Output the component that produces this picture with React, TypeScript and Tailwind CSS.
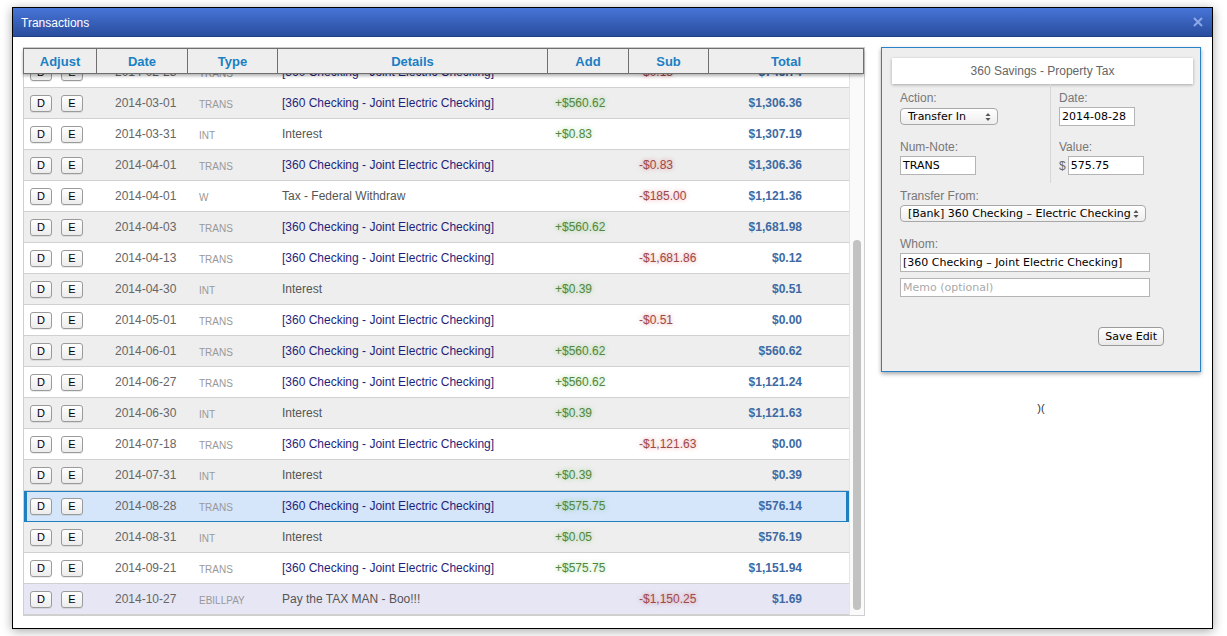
import React from "react";

type Row = {
  date: string;
  type: string;
  details: string;
  link?: boolean;
  add?: string;
  sub?: string;
  total: string;
  tone: "gray" | "white" | "sel" | "lav";
};

const rows: Row[] = [
  { date: "2014-02-28", type: "TRANS", details: "[360 Checking - Joint Electric Checking]", link: true, sub: "-$0.13", total: "$745.74", tone: "white" },
  { date: "2014-03-01", type: "TRANS", details: "[360 Checking - Joint Electric Checking]", link: true, add: "+$560.62", total: "$1,306.36", tone: "gray" },
  { date: "2014-03-31", type: "INT", details: "Interest", add: "+$0.83", total: "$1,307.19", tone: "white" },
  { date: "2014-04-01", type: "TRANS", details: "[360 Checking - Joint Electric Checking]", link: true, sub: "-$0.83", total: "$1,306.36", tone: "gray" },
  { date: "2014-04-01", type: "W", details: "Tax - Federal Withdraw", sub: "-$185.00", total: "$1,121.36", tone: "white" },
  { date: "2014-04-03", type: "TRANS", details: "[360 Checking - Joint Electric Checking]", link: true, add: "+$560.62", total: "$1,681.98", tone: "gray" },
  { date: "2014-04-13", type: "TRANS", details: "[360 Checking - Joint Electric Checking]", link: true, sub: "-$1,681.86", total: "$0.12", tone: "white" },
  { date: "2014-04-30", type: "INT", details: "Interest", add: "+$0.39", total: "$0.51", tone: "gray" },
  { date: "2014-05-01", type: "TRANS", details: "[360 Checking - Joint Electric Checking]", link: true, sub: "-$0.51", total: "$0.00", tone: "white" },
  { date: "2014-06-01", type: "TRANS", details: "[360 Checking - Joint Electric Checking]", link: true, add: "+$560.62", total: "$560.62", tone: "gray" },
  { date: "2014-06-27", type: "TRANS", details: "[360 Checking - Joint Electric Checking]", link: true, add: "+$560.62", total: "$1,121.24", tone: "white" },
  { date: "2014-06-30", type: "INT", details: "Interest", add: "+$0.39", total: "$1,121.63", tone: "gray" },
  { date: "2014-07-18", type: "TRANS", details: "[360 Checking - Joint Electric Checking]", link: true, sub: "-$1,121.63", total: "$0.00", tone: "white" },
  { date: "2014-07-31", type: "INT", details: "Interest", add: "+$0.39", total: "$0.39", tone: "gray" },
  { date: "2014-08-28", type: "TRANS", details: "[360 Checking - Joint Electric Checking]", link: true, add: "+$575.75", total: "$576.14", tone: "sel" },
  { date: "2014-08-31", type: "INT", details: "Interest", add: "+$0.05", total: "$576.19", tone: "gray" },
  { date: "2014-09-21", type: "TRANS", details: "[360 Checking - Joint Electric Checking]", link: true, add: "+$575.75", total: "$1,151.94", tone: "white" },
  { date: "2014-10-27", type: "EBILLPAY", details: "Pay the TAX MAN - Boo!!!", sub: "-$1,150.25", total: "$1.69", tone: "lav" },
];

const toneClass = {
  gray: "bg-[#eeeeee] border-b border-[#d0d0d0]",
  white: "bg-white border-b border-[#d0d0d0]",
  sel: "bg-[#d5e5fa] border-b border-[#1f7fc0] shadow-[inset_3px_0_0_#1f7fc0,inset_-3px_0_0_#1f7fc0,inset_0_1px_0_#1f7fc0]",
  lav: "bg-[#e6e6f5] border-b border-[#d0d0d0]",
};

const inputFont = "font-['DejaVu_Sans',sans-serif] text-[11px] text-black";

const SmallBtn = ({ label }: { label: string }) => (
  <button className="w-[22px] h-[17px] rounded-[3px] border border-[#9a9a9a] bg-gradient-to-b from-white to-[#ececec] text-[11px] leading-none text-black shadow-[0_1px_0_rgba(0,0,0,0.08)]">
    {label}
  </button>
);

const Arrows = () => (
  <svg width="6" height="10" viewBox="0 0 6 10" className="ml-auto shrink-0">
    <path d="M3 1 L5.5 4 H0.5 Z" fill="#555" />
    <path d="M3 9 L5.5 6 H0.5 Z" fill="#555" />
  </svg>
);

const headers = [
  { label: "Adjust", w: "w-[73px]" },
  { label: "Date", w: "w-[91px]" },
  { label: "Type", w: "w-[90px]" },
  { label: "Details", w: "w-[270px]" },
  { label: "Add", w: "w-[81px]" },
  { label: "Sub", w: "w-[80px]" },
  { label: "Total", w: "flex-1" },
];

export default function App() {
  return (
    <div className="w-[1227px] h-[636px] bg-white pt-[7px] pl-[12px] font-['Liberation_Sans',Arial,sans-serif]">
      <div className="w-[1201px] h-[622px] border border-black bg-white shadow-[0_2px_10px_rgba(0,0,0,0.35)] flex flex-col">
        {/* title bar */}
        <div className="h-[29px] flex items-center pl-[8px] pr-[9px] bg-gradient-to-b from-[#4775d8] to-[#2a4d9e] border-b border-[#203f85]">
          <span className="text-white text-[12px] pt-[2px]">Transactions</span>
          <svg width="10" height="10" viewBox="0 0 10 10" className="ml-auto">
            <path d="M1 1 L9 9 M9 1 L1 9" stroke="#8ea7e6" strokeWidth="2" />
          </svg>
        </div>

        <div className="flex pl-[10px] pt-[10px]">
          {/* table */}
          <div className="w-[842px] h-[569px] border border-[#cfcfcf] flex flex-col bg-white">
            <div className="relative z-10 h-[26px] -ml-px flex border border-[#6f6f6f] bg-[#eeeeee] shadow-[0_2px_3px_rgba(0,0,0,0.3)]">
              {headers.map((h, i) => (
                <div
                  key={h.label}
                  className={`${h.w} flex items-center justify-center pt-[1px] text-[13px] font-bold text-[#1b7fc3] ${
                    i < headers.length - 1 ? "border-r border-[#6f6f6f]" : ""
                  }`}
                >
                  {h.label}
                </div>
              ))}
            </div>
            <div className="flex flex-1 min-h-0">
              <div className="w-[825px] overflow-hidden">
                <div className="-mt-[17px]">
                  {rows.map((r, i) => (
                    <div key={i} className={`h-[31px] flex items-center text-[12px] ${toneClass[r.tone]}`}>
                      <div className="w-[72px] flex gap-[9px] pl-[6px]">
                        <SmallBtn label="D" />
                        <SmallBtn label="E" />
                      </div>
                      <div className="w-[91px] pl-[19px] text-[#666]">{r.date}</div>
                      <div className="w-[90px] pl-[12px] pt-[2px] text-[10px] text-[#999]">{r.type}</div>
                      <div className={`w-[270px] pl-[5px] ${r.link ? "text-[#1f1f7a]" : "text-[#555]"}`}>{r.details}</div>
                      <div className="w-[81px] pl-[8px] text-[#55853f] [text-shadow:0_0_4px_rgba(90,200,70,0.6)]">{r.add}</div>
                      <div className="w-[80px] pl-[11px] text-[#9b4a4a] [text-shadow:0_0_4px_rgba(220,80,80,0.6)]">{r.sub}</div>
                      <div className="flex-1 text-right pr-[47px] font-bold text-[#3d6aa3]">{r.total}</div>
                    </div>
                  ))}
                </div>
              </div>
              <div className="w-[15px] border-l border-[#e4e4e4] bg-[#fafafa] flex flex-col pt-[166px] pb-[5px] items-center">
                <div className="w-[8px] flex-1 rounded-full bg-[#c2c2c2]" />
              </div>
            </div>
          </div>

          {/* edit panel */}
          <div className="ml-[16px] flex flex-col items-center">
            <div className="w-[320px] h-[325px] border border-[#2a83c6] bg-[#eeeeee] shadow-[0_2px_4px_rgba(0,0,0,0.35)] pt-[10px] pl-[10px] pr-[7px]">
              <div className="h-[26px] bg-white shadow-[0_1px_3px_rgba(0,0,0,0.3)] flex items-center justify-center text-[12px] text-[#666]">
                360 Savings - Property Tax
              </div>
              <div className="pl-[8px] text-[12px] leading-[14px] text-[#777]">
                <div className="flex">
                  <div className="w-[151px] pt-[7px] pb-[8px] border-r border-[#d6d6d6]">
                    <div>Action:</div>
                    <div className={`mt-[3px] w-[98px] h-[17px] rounded-[4px] border border-[#a8a8a8] bg-gradient-to-b from-white to-[#eeeeee] flex items-center pl-[7px] pr-[6px] ${inputFont}`}>
                      Transfer In
                      <Arrows />
                    </div>
                    <div className="mt-[15px]">Num-Note:</div>
                    <div className={`mt-[2px] w-[76px] h-[19px] border border-[#b4b4b4] bg-white flex items-center pl-[2px] ${inputFont}`}>
                      TRANS
                    </div>
                  </div>
                  <div className="pl-[8px] pt-[7px]">
                    <div>Date:</div>
                    <div className={`mt-[2px] w-[76px] h-[19px] border border-[#b4b4b4] bg-white flex items-center pl-[2px] ${inputFont}`}>
                      2014-08-28
                    </div>
                    <div className="mt-[14px]">Value:</div>
                    <div className="mt-[2px] flex items-center">
                      <span className="text-[12px] text-[#666] mr-[2px]">$</span>
                      <div className={`w-[76px] h-[19px] border border-[#b4b4b4] bg-white flex items-center pl-[2px] ${inputFont}`}>
                        575.75
                      </div>
                    </div>
                  </div>
                </div>
                <div className="mt-[6px]">Transfer From:</div>
                <div className={`mt-[2px] w-[246px] h-[17px] rounded-[4px] border border-[#a8a8a8] bg-gradient-to-b from-white to-[#eeeeee] flex items-center pl-[7px] pr-[6px] ${inputFont}`}>
                  [Bank] 360 Checking – Electric Checking
                  <Arrows />
                </div>
                <div className="mt-[15px]">Whom:</div>
                <div className={`mt-[2px] w-[250px] h-[19px] border border-[#b4b4b4] bg-white flex items-center pl-[2px] ${inputFont}`}>
                  [360 Checking – Joint Electric Checking]
                </div>
                <div className="mt-[6px] w-[250px] h-[19px] border border-[#b4b4b4] bg-white flex items-center pl-[2px] font-['DejaVu_Sans',sans-serif] text-[11px] text-[#aaa]">
                  Memo (optional)
                </div>
                <div className="flex justify-end pr-[29px] mt-[30px]">
                  <button className={`h-[19px] px-[6px] rounded-[4px] border border-[#9a9a9a] bg-gradient-to-b from-white to-[#e9e9e9] ${inputFont}`}>
                    Save Edit
                  </button>
                </div>
              </div>
            </div>
            <div className="mt-[28px] text-[11px] text-[#333]">)(</div>
          </div>
        </div>
      </div>
    </div>
  );
}
